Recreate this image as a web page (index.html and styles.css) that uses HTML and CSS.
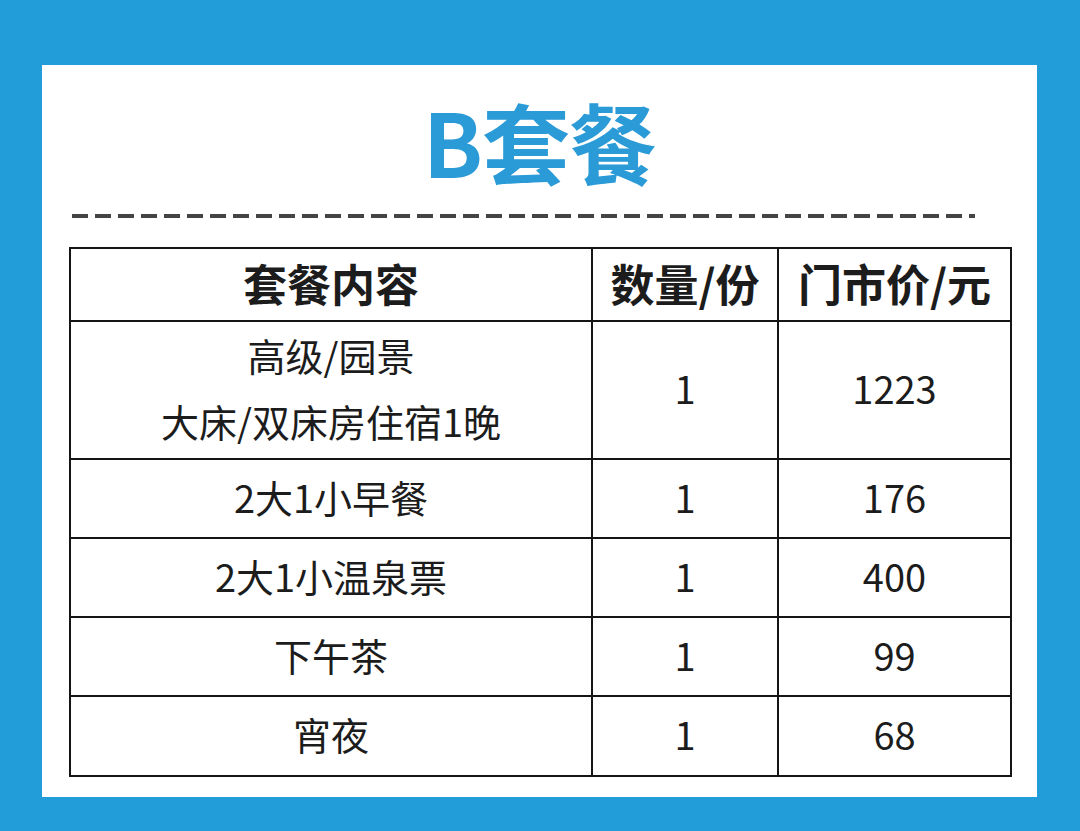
FILE: index.html
```html
<!DOCTYPE html>
<html lang="zh-CN">
<head>
<meta charset="utf-8">
<title>B套餐</title>
<link rel="stylesheet" href="styles.css">
</head>
<body>
<div class="card">
  <h1 class="title">B套餐</h1>
  <div class="dash"></div>
  <table class="menu">
    <colgroup>
      <col class="c1"><col class="c2"><col class="c3">
    </colgroup>
    <thead>
      <tr class="head"><th>套餐内容</th><th>数量/份</th><th>门市价/元</th></tr>
    </thead>
    <tbody>
      <tr class="tall"><td class="two">高级/园景<br>大床/双床房住宿1晚</td><td>1</td><td>1223</td></tr>
      <tr class="row"><td>2大1小早餐</td><td>1</td><td>176</td></tr>
      <tr class="row"><td>2大1小温泉票</td><td>1</td><td>400</td></tr>
      <tr class="row"><td>下午茶</td><td>1</td><td>99</td></tr>
      <tr class="row last"><td>宵夜</td><td>1</td><td>68</td></tr>
    </tbody>
  </table>
</div>
</body>
</html>
```
FILE: styles.css
```css
html, body {
  margin: 0;
  padding: 0;
}
body {
  background: #229dd9;
  width: 1080px;
  height: 831px;
  overflow: hidden;
  font-family: "Noto Sans CJK SC", "Noto Sans", sans-serif;
}
.card {
  background: #ffffff;
  margin: 65px 43px 0 42px;
  width: 995px;
  height: 732px;
  box-sizing: border-box;
  padding: 0 27px;
  display: flex;
  flex-direction: column;
}
.title {
  margin: 25px 0 0 0;
  font-size: 88px;
  line-height: 100px;
  font-weight: 700;
  color: #2a9bd7;
  text-align: center;
  letter-spacing: -1px;
}
.dash {
  margin: 24px 0 0 3px;
  width: 903px;
  height: 4px;
  background: repeating-linear-gradient(to right, #444 0, #444 16px, transparent 16px, transparent 23px);
}
.menu {
  margin-top: 29px;
  width: 941px;
  border-collapse: collapse;
  table-layout: fixed;
  color: #1c1c1c;
}
.c1 { width: 522px; }
.c2 { width: 186px; }
.c3 { width: 233px; }
.menu th, .menu td {
  border: 2px solid #151515;
  text-align: center;
  vertical-align: middle;
  padding: 0 0 4px 0;
}
.menu th {
  font-size: 44px;
  font-weight: 700;
  line-height: 50px;
}
.menu td {
  font-size: 38px;
  font-weight: 400;
  line-height: 44px;
}
.menu td.two {
  line-height: 66px;
}
.head { height: 73px; }
.tall { height: 137px; }
.row { height: 79px; }
.last { height: 80px; }
```
